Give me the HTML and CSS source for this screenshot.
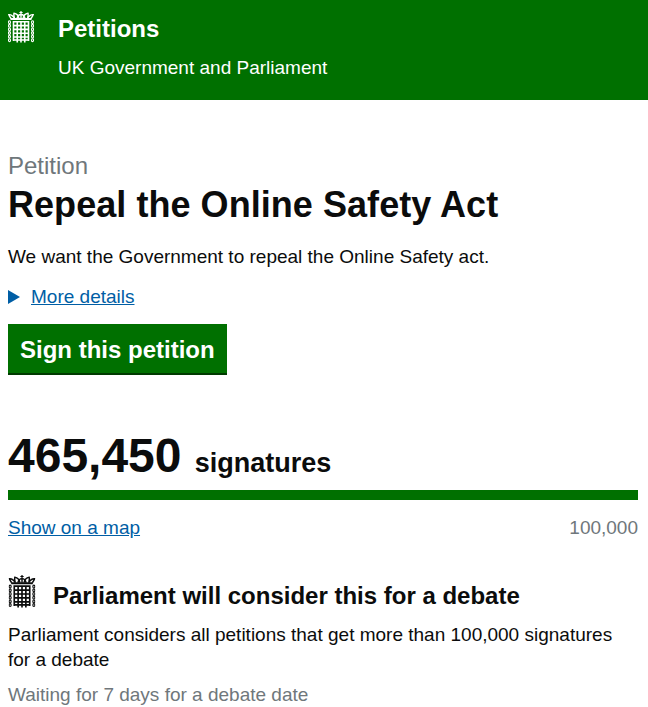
FILE: index.html
```html
<!DOCTYPE html>
<html lang="en">
<head>
    <meta charset="UTF-8">
    <meta name="viewport" content="width=device-width, initial-scale=1.0">
    <title>Repeal the Online Safety Act - Petitions</title>
    <link rel="stylesheet" href="styles.css">
</head>

<body>

    <header class="site-header">
        <svg class="portcullis" viewBox="0 0 26 32" width="26" height="32" aria-hidden="true">
            <use href="#portcullis"></use>
        </svg>
        <div class="site-title">
            <div class="site-name">Petitions</div>
            <div class="site-org">UK Government and Parliament</div>
        </div>
    </header>

    <main>
        <p class="kicker">Petition</p>
        <h1>Repeal the Online Safety Act</h1>
        <p class="summary">We want the Government to repeal the Online Safety act.</p>
        <p class="details"><span class="arrow"></span><a href="#">More details</a></p>
        <a class="button" href="#">Sign this petition</a>

        <p class="signatures"><span class="count">465,450</span> <span class="count-label">signatures</span></p>
        <div class="progress"></div>
        <div class="progress-labels">
            <a href="#">Show on a map</a>
            <span class="muted">100,000</span>
        </div>

        <div class="debate-heading">
            <svg class="portcullis" viewBox="0 0 26 32" width="28" height="33" aria-hidden="true">
                <use href="#portcullis"></use>
            </svg>
            <h2>Parliament will consider this for a debate</h2>
        </div>
        <p class="debate-text">Parliament considers all petitions that get more than 100,000 signatures for a debate</p>
        <p class="muted waiting">Waiting for 7 days for a debate date</p>
    </main>

    <svg class="defs" width="0" height="0" aria-hidden="true">
        <symbol id="portcullis" viewBox="0 0 26 32">
            <g id="chain" fill="none" stroke="currentColor" stroke-width="1.1">
                <ellipse cx="1.500" cy="11.200" rx="1" ry="1.400"/>
                <ellipse cx="1.500" cy="14.800" rx="1" ry="1.400"/>
                <ellipse cx="1.500" cy="18.400" rx="1" ry="1.400"/>
                <ellipse cx="1.500" cy="22" rx="1" ry="1.400"/>
                <ellipse cx="1.500" cy="25.600" rx="1" ry="1.400"/>
                <ellipse cx="1.500" cy="29.200" rx="1" ry="1.400"/>
            </g>
            <use href="#chain" x="23"/>
            <!-- grille -->
            <path fill="none" stroke="currentColor" stroke-width="1.600" d="M5.500 10v20M9.250 10v21.500M13 10v21.500M16.750 10v21.500M20.500 10v20M5 10.800h16M5 14.600h16M5 18.400h16M5 22.200h16M5 26h16M5 29h16"/>
            <!-- crown -->
            <path fill="currentColor" d="M2.500 7h21v2h-21zM12.400 0h1.200v1h1v1h-1v1.500h-1.200V2h-1V1h1z"/>
            <path fill="none" stroke="currentColor" stroke-width="1.400" d="M3 7.500C2 6 1.200 5 .8 3.600 3 3.400 5 4.800 6.500 7.500M6.500 7.500C6 5 5.500 3.500 6 2.200 8.500 2.600 10.500 4.500 11 7.500M13 7.500V3.500M15 7.500C15.500 4.500 17.500 2.600 20 2.200 20.500 3.500 20 5 19.500 7.500M19.500 7.500C21 4.800 23 3.400 25.200 3.600 24.800 5 24 6 23 7.500M9 7.500C9.500 5 11 3.600 13 3.500 15 3.600 16.500 5 17 7.500"/>
        </symbol>
    </svg>

</body>

</html>
```

FILE: styles.css
```css
body {
    margin: 0;
    font-family: "Liberation Sans", Arial, sans-serif;
    font-size: 19px;
    line-height: 25px;
    color: #0b0c0c;
    background-color: #fff;
    overflow: hidden;
}

p {
    margin: 0;
}

a {
    color: #005ea5;
}

.defs {
    position: absolute;
}

.site-header {
    display: flex;
    gap: 24px;
    height: 100px;
    padding: 11px 8px 0;
    box-sizing: border-box;
    color: #fff;
    background-color: #007000;
}

.site-name {
    font-size: 24px;
    font-weight: bold;
    line-height: 36px;
}

.site-org {
    margin-top: 7px;
    line-height: 28px;
}

main {
    padding: 0 10px 0 8px;
}

.kicker {
    margin-top: 52px;
    font-size: 24px;
    line-height: 28px;
    color: #6f777b;
}

h1 {
    margin: 5px 0 0;
    font-size: 36px;
    line-height: 40px;
    letter-spacing: 0.05px;
}

.summary {
    margin-top: 19px;
}

.details {
    display: flex;
    align-items: center;
    margin-top: 15px;
}

.arrow {
    width: 0;
    height: 0;
    margin-right: 11px;
    border-left: 12px solid #005ea5;
    border-top: 7px solid transparent;
    border-bottom: 7px solid transparent;
}

.button {
    display: inline-block;
    margin-top: 15px;
    padding: 9px 12px 7px;
    font-size: 24px;
    font-weight: bold;
    line-height: 33px;
    color: #fff;
    text-decoration: none;
    background-color: #007000;
    border-bottom: 2px solid #003a00;
}

.signatures {
    margin-top: 61px;
    line-height: 40px;
}

.count {
    font-size: 48px;
    font-weight: bold;
}

.count-label {
    margin-left: 8px;
    font-size: 27px;
    font-weight: bold;
}

.progress {
    height: 10px;
    margin-top: 4px;
    background-color: #007000;
}

.progress-labels {
    display: flex;
    justify-content: space-between;
    margin-top: 15px;
}

.muted {
    color: #6f777b;
}

.debate-heading {
    display: flex;
    align-items: flex-start;
    gap: 17px;
    margin-top: 35px;
}

h2 {
    margin: 6px 0 0;
    font-size: 24px;
    line-height: 30px;
}

.debate-text {
    margin-top: 11px;
    padding-right: 20px;
}

.waiting {
    margin-top: 10px;
}
```
